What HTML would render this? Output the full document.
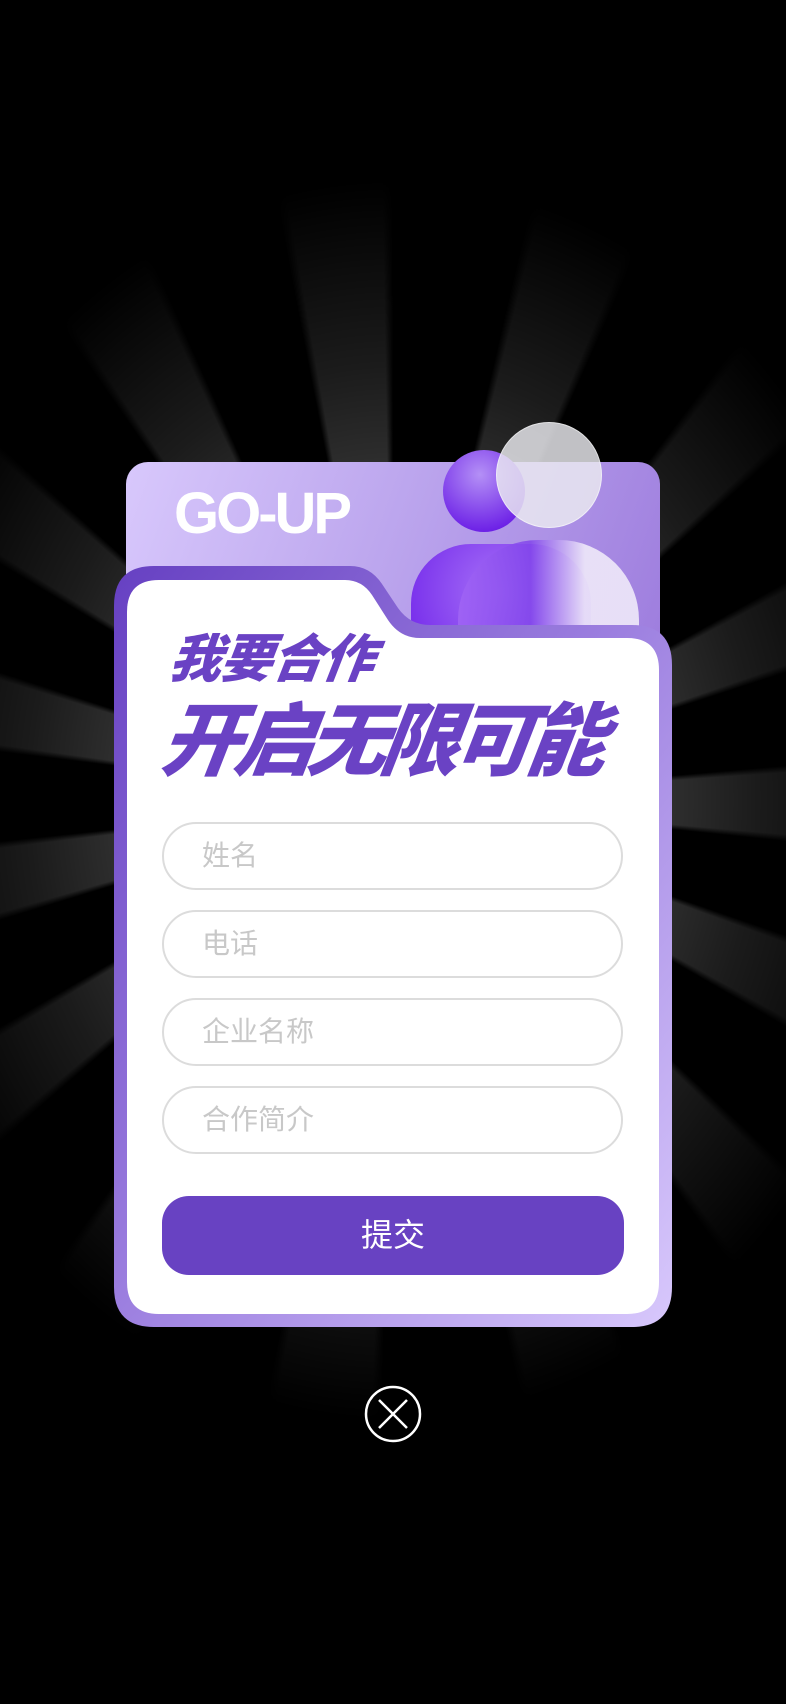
<!DOCTYPE html>
<html><head><meta charset="utf-8"><style>
html,body{margin:0;padding:0;background:#000;}
body{width:786px;height:1704px;position:relative;overflow:hidden;font-family:"Liberation Sans","Noto Sans CJK SC",sans-serif;}
.rays{position:absolute;left:0;top:0;width:786px;height:1704px;
background:repeating-conic-gradient(from 4deg at 393px 800px,#000 0deg 9deg,#444 10deg 19deg,#000 20deg 24deg);
-webkit-mask:radial-gradient(ellipse 520px 620px at 393px 800px,rgba(0,0,0,1) 35%,rgba(0,0,0,0.4) 70%,rgba(0,0,0,0) 100%);
mask:radial-gradient(ellipse 520px 620px at 393px 800px,rgba(0,0,0,1) 35%,rgba(0,0,0,0.4) 70%,rgba(0,0,0,0) 100%);}
.back{position:absolute;left:126px;top:462px;width:534px;height:300px;border-radius:22px;background:linear-gradient(110deg,#d8c8fc 0%,#b9a2ec 50%,#9a78dc 100%);}
.goup{position:absolute;left:174px;top:482px;font-size:58px;font-weight:bold;color:#fff;letter-spacing:-3px;line-height:64px;}
.ball{position:absolute;border-radius:50%;}
.t1{position:absolute;left:170px;top:628px;font-size:52px;font-weight:900;font-style:italic;color:#6a42c4;line-height:64px;letter-spacing:-1px;transform:skewX(-8deg);}
.t2{position:absolute;left:162px;top:694px;font-size:80px;font-weight:900;font-style:italic;color:#6a42c4;line-height:96px;letter-spacing:-7px;transform:skewX(-8deg);}
.inp{position:absolute;left:162px;width:457px;height:64px;border:2px solid #dcdcdc;border-radius:34px;background:#fff;color:#c8c8c8;font-size:28px;line-height:64px;box-sizing:content-box;}
.inp span{position:absolute;left:38px;}
.btn{position:absolute;left:162px;top:1196px;width:462px;height:79px;border-radius:27px;background:#6842c2;color:#fff;font-size:32px;text-align:center;line-height:79px;}
</style></head><body>
<div class="rays"></div>
<div class="back"></div>
<div class="goup">GO-UP</div>
<div class="ball" style="left:443px;top:450px;width:82px;height:82px;background:radial-gradient(circle at 45% 30%,#b490f6,#6b1ee6 80%);"></div>
<div class="ball" style="left:496px;top:422px;width:104px;height:104px;background:rgba(235,235,240,0.82);border:1px solid rgba(255,255,255,0.5);"></div>
<div style="position:absolute;left:411px;top:544px;width:180px;height:120px;border-radius:60px 60px 0 0;background:radial-gradient(circle at 50% 40%,#a873f8,#7a32ec 80%);"></div>
<div style="position:absolute;left:458px;top:540px;width:181px;height:130px;border-radius:80px 80px 0 0;background:linear-gradient(90deg,rgba(160,100,245,0.9) 0%,rgba(130,70,235,0.85) 40%,rgba(235,228,248,0.95) 70%);"></div>
<svg style="position:absolute;left:0;top:0" width="786" height="1704">
<defs><linearGradient id="g" x1="0" y1="0" x2="1" y2="1"><stop offset="0" stop-color="#6640c2"/><stop offset="0.5" stop-color="#9d80e0"/><stop offset="1" stop-color="#d8c8fc"/></linearGradient></defs>
<path d="M114,606 Q114,566 154,566 L350,566 Q370,566 382,584 L398,608 Q410,625 430,625 L632,625 Q672,625 672,665 L672,1287 Q672,1327 632,1327 L154,1327 Q114,1327 114,1287 Z" fill="url(#g)"/>
<path d="M127,612 Q127,580 159,580 L345,580 Q362,580 372,595 L388,620 Q400,638 420,638 L627,638 Q659,638 659,670 L659,1282 Q659,1314 627,1314 L159,1314 Q127,1314 127,1282 Z" fill="#fff"/>
<circle cx="393" cy="1414" r="27" fill="none" stroke="#fff" stroke-width="2.5"/>
<path d="M379,1400 L407,1428 M407,1400 L379,1428" stroke="#fff" stroke-width="2.5"/>
</svg>
<div class="t1">我要合作</div>
<div class="t2">开启无限可能</div>
<div class="inp" style="top:822px"><span>姓名</span></div>
<div class="inp" style="top:910px"><span>电话</span></div>
<div class="inp" style="top:998px"><span>企业名称</span></div>
<div class="inp" style="top:1086px"><span>合作简介</span></div>
<div class="btn">提交</div>
</body></html>
